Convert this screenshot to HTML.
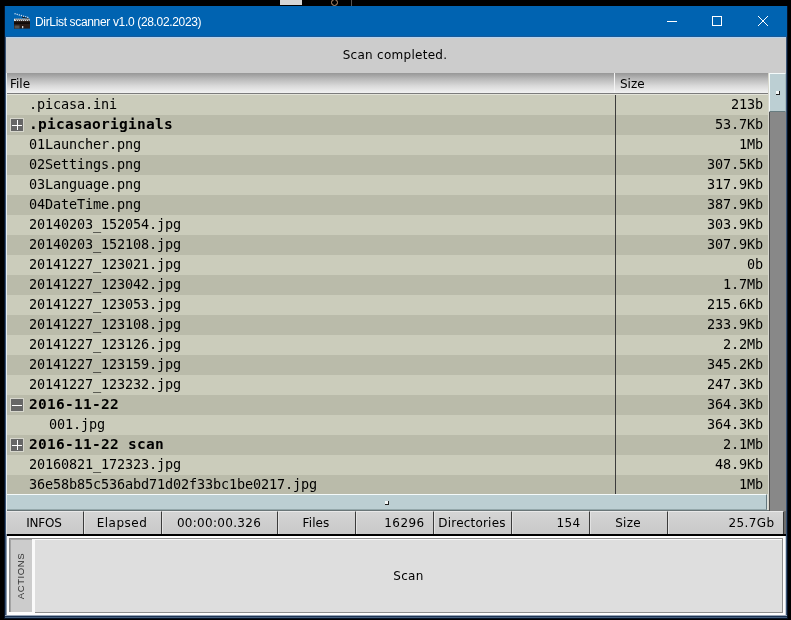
<!DOCTYPE html>
<html><head><meta charset="utf-8"><title>DirList scanner</title>
<style>
html,body{margin:0;padding:0;background:#000;}
body{width:791px;height:620px;position:relative;overflow:hidden;font-family:"DejaVu Sans","Liberation Sans",sans-serif;font-size:12px;color:#000;}
div,span,i,svg{position:absolute;box-sizing:border-box;}
span,#status{will-change:transform;}
#wout{left:4px;top:6px;width:784px;height:613px;background:#061226;}
#win{left:5px;top:6px;width:782px;height:612px;background:#3a5474;}
#b615{left:5px;top:615px;width:782px;height:1px;background:#9aa6b8;}
#b616{left:5px;top:616px;width:782px;height:1px;background:#1c3352;}
#b617{left:5px;top:617px;width:782px;height:1px;background:#46607e;}
#lwhite{left:6px;top:73px;width:1px;height:438px;background:#e8eef2;}
#title{left:5px;top:6px;width:782px;height:31px;background:#0063b1;}
#title .t{left:30px;top:9px;font:12px "Liberation Sans",sans-serif;color:#fff;letter-spacing:-0.34px;white-space:nowrap;}
#tline{left:6px;top:37px;width:780px;height:1px;background:#b4d4f2;}
#tdark{left:5px;top:36px;width:782px;height:1px;background:#1a5a98;}
#client{left:6px;top:38px;width:780px;height:577px;background:#cccccc;}
#status{left:5px;top:38px;width:780px;height:35px;text-align:center;line-height:35px;letter-spacing:0.28px;}
#hdr{left:6px;top:73px;width:762px;height:20px;background:linear-gradient(#979797 0%,#b9b9b9 30%,#dadada 65%,#f2f2f2 100%);}
#hdr span{top:4px;letter-spacing:0;}
#hdrline{left:6px;top:93px;width:762px;height:1px;background:#7c7c7c;}
#hdrline2{left:6px;top:94px;width:762px;height:1px;background:#e4e4da;}
#rows{left:6px;top:95px;width:762px;height:400px;background:#cbccbb;overflow:hidden;font-family:"DejaVu Sans Mono","Liberation Mono",monospace;font-size:13.5px;letter-spacing:-0.127px;}
.r{left:0;width:762px;height:20px;background:#cbccbb;line-height:19px;white-space:nowrap;}
.r.d{background:#babbaa;}
.r.b .n{font-weight:bold;font-size:14.5px;letter-spacing:0.27px;}
.r .n{top:0;}
.r .s{top:0;right:4.5px;text-align:right;}
.bx{left:4px;top:3px;width:14px;height:14px;background:#666;border:1px solid #d6d6cc;}
.bx:before{content:"";position:absolute;left:1px;top:6px;width:10px;height:1px;background:#fff;}
.bx.pl:after{content:"";position:absolute;left:6px;top:1px;width:1px;height:10px;background:#fff;}
#colsep{left:615px;top:95px;width:1px;height:400px;background:#3c3c3c;}
#hsep{left:614px;top:73px;width:1px;height:21px;background:#f4f4f4;}
#gap{left:768px;top:73px;width:1px;height:437px;background:#d8d8ce;}
#vtrack{left:769px;top:73px;width:17px;height:438px;background:#888;border-left:1px solid #4e4e4e;}
#vthumb{left:769px;top:73px;width:17px;height:39px;background:#bccfd3;border-left:1px solid #f4fafa;border-top:1px solid #f4fafa;border-right:1px solid #a6babd;border-bottom:1px solid #687c80;}
.grip{width:4px;height:4px;background:#f4f8f8;border-right:1px solid #222;border-bottom:1px solid #222;}
#htrack{left:6px;top:494px;width:762px;height:16px;background:#dcdfdc;}
#hthumb{left:6px;top:494px;width:761px;height:16px;background:#bccfd3;border-top:1px solid #f4fafa;border-left:1px solid #f4fafa;border-right:1px solid #64787d;border-bottom:1px solid #94a8ab;}
#hline{left:6px;top:510px;width:763px;height:1px;background:#6a7678;}
#info{left:6px;top:511px;width:780px;height:23px;background:#6e6e6e;}
.c{top:511px;height:23px;background:linear-gradient(#d5d5d5,#cecece 50%,#c9c9c9);border-right:1px solid #3a3a3a;border-left:1px solid #e2e2e2;border-top:1px solid #e9e9e9;line-height:24px;letter-spacing:0.2px;white-space:nowrap;}
.c span{top:-1px;}
.c.c span{left:-2px;right:0;text-align:center;}
.c.r span{right:8.5px;text-align:right;}
#bline{left:7px;top:534px;width:779px;height:2px;background:#000;}
#panel{left:7px;top:536px;width:778px;height:79px;background:#fdfdfd;}
#pl6{left:6px;top:534px;width:1px;height:81px;background:#8c9aac;}
#pr785{left:785px;top:536px;width:1px;height:79px;background:#c9d2dc;}
#pin{left:9px;top:538px;width:774px;height:75px;background:#8e8e8e;}
#tab{left:10px;top:539px;width:22px;height:73px;background:#cccccc;border-left:1px solid #a4a4a4;border-top:1px solid #a4a4a4;}
#tab span{left:-15.5px;top:30px;width:50px;height:12px;line-height:12px;text-align:center;font:9.5px "Liberation Sans",sans-serif;letter-spacing:0.6px;color:#333;transform:rotate(-90deg);}
#btn{left:32px;top:539px;width:750px;height:73px;background:#dedede;border-left:3px solid #fafafa;border-top:1px solid #fafafa;text-align:center;}
#btn span{left:0;right:0;top:29px;letter-spacing:0.28px;}
</style></head><body>
<div style="left:280px;top:0;width:22px;height:5px;background:#d6d6d6"></div>
<div style="left:331px;top:-1px;width:7px;height:7px;border:1px solid #c09878;border-radius:50%"></div>
<div style="left:351px;top:0;width:1px;height:6px;background:#555"></div>
<div id="wout"></div><div id="win"></div>
<div id="title">
 <svg width="18" height="18" style="left:8px;top:6px" viewBox="0 0 18 18">
  <path d="M1.5 1.6L15.5 5.6" stroke="#cfdff0" stroke-width="1.300" stroke-dasharray="1.2 1"/>
  <path d="M9 5L16.3 7" stroke="#14100e" stroke-width="1"/>
  <rect x="1" y="8.6" width="16" height="8" fill="#2a1c17"/>
  <rect x="1" y="6.7" width="15.6" height="2.2" fill="#f0f0f0"/>
  <path d="M2.5 6.7l1.3 2.2M4.5 6.7l1.3 2.2M6.5 6.7l1.3 2.2M8.500 6.7l1.3 2.2M10.5 6.7l1.3 2.2M12.5 6.7l1.3 2.2M14.5 6.7l1.3 2.2" stroke="#3a3a3a" stroke-width="0.9"/>
  <rect x="1" y="10.300" width="16" height="1.600" fill="#0e0908"/>
  <rect x="1.5" y="13.5" width="5" height="3" fill="#56524e"/>
  <rect x="9" y="14" width="1.300" height="2.200" fill="#cfcfcf"/>
 </svg>
 <span class="t">DirList scanner v1.0 (28.02.2023)</span>
 <svg width="140" height="31" style="left:642px;top:0" viewBox="0 0 140 31" fill="none" stroke="#fff" stroke-width="1">
  <path d="M20 15.5h10"/>
  <rect x="65.500" y="10.500" width="9" height="9"/>
  <path d="M111 10l10 10M121 10l-10 10"/>
 </svg>
</div>
<div id="tdark"></div><div id="tline"></div>
<div id="client"></div>
<div id="status">Scan completed.</div>
<div id="hdr"><span style="left:4px">File</span><span style="left:613.5px">Size</span></div>
<div id="hsep"></div>
<div id="hdrline"></div><div id="hdrline2"></div>
<div id="rows">
<div class="r" style="top:0px"><span class="n" style="left:23px">.picasa.ini</span><span class="s">213b</span></div>
<div class="r d b" style="top:20px"><i class="bx pl"></i><span class="n" style="left:23px">.picasaoriginals</span><span class="s">53.7Kb</span></div>
<div class="r" style="top:40px"><span class="n" style="left:23px">01Launcher.png</span><span class="s">1Mb</span></div>
<div class="r d" style="top:60px"><span class="n" style="left:23px">02Settings.png</span><span class="s">307.5Kb</span></div>
<div class="r" style="top:80px"><span class="n" style="left:23px">03Language.png</span><span class="s">317.9Kb</span></div>
<div class="r d" style="top:100px"><span class="n" style="left:23px">04DateTime.png</span><span class="s">387.9Kb</span></div>
<div class="r" style="top:120px"><span class="n" style="left:23px">20140203_152054.jpg</span><span class="s">303.9Kb</span></div>
<div class="r d" style="top:140px"><span class="n" style="left:23px">20140203_152108.jpg</span><span class="s">307.9Kb</span></div>
<div class="r" style="top:160px"><span class="n" style="left:23px">20141227_123021.jpg</span><span class="s">0b</span></div>
<div class="r d" style="top:180px"><span class="n" style="left:23px">20141227_123042.jpg</span><span class="s">1.7Mb</span></div>
<div class="r" style="top:200px"><span class="n" style="left:23px">20141227_123053.jpg</span><span class="s">215.6Kb</span></div>
<div class="r d" style="top:220px"><span class="n" style="left:23px">20141227_123108.jpg</span><span class="s">233.9Kb</span></div>
<div class="r" style="top:240px"><span class="n" style="left:23px">20141227_123126.jpg</span><span class="s">2.2Mb</span></div>
<div class="r d" style="top:260px"><span class="n" style="left:23px">20141227_123159.jpg</span><span class="s">345.2Kb</span></div>
<div class="r" style="top:280px"><span class="n" style="left:23px">20141227_123232.jpg</span><span class="s">247.3Kb</span></div>
<div class="r d b" style="top:300px"><i class="bx mi"></i><span class="n" style="left:23px">2016-11-22</span><span class="s">364.3Kb</span></div>
<div class="r" style="top:320px"><span class="n" style="left:43px">001.jpg</span><span class="s">364.3Kb</span></div>
<div class="r d b" style="top:340px"><i class="bx pl"></i><span class="n" style="left:23px">2016-11-22 scan</span><span class="s">2.1Mb</span></div>
<div class="r" style="top:360px"><span class="n" style="left:23px">20160821_172323.jpg</span><span class="s">48.9Kb</span></div>
<div class="r d" style="top:380px"><span class="n" style="left:23px">36e58b85c536abd71d02f33bc1be0217.jpg</span><span class="s">1Mb</span></div>
</div>
<div id="colsep"></div>
<div id="vtrack"></div>
<div id="gap"></div>
<div id="vthumb"></div>
<div class="grip" style="left:776px;top:91px"></div>
<div id="htrack"></div>
<div id="hthumb"></div>
<div class="grip" style="left:385px;top:501px"></div>
<div id="hline"></div>
<div id="info"></div>
<div class="c c" style="left:6px;width:78px"><span style="letter-spacing:-0.2px">INFOS</span></div>
<div class="c c" style="left:84px;width:78px"><span style="letter-spacing:0.5px">Elapsed</span></div>
<div class="c c" style="left:162px;width:116px"><span style="letter-spacing:0.3px">00:00:00.326</span></div>
<div class="c c" style="left:278px;width:78px"><span style="letter-spacing:0.1px">Files</span></div>
<div class="c r" style="left:356px;width:78px"><span style="letter-spacing:0.4px">16296</span></div>
<div class="c c" style="left:434px;width:78px"><span style="letter-spacing:0.2px">Directories</span></div>
<div class="c r" style="left:512px;width:78px"><span style="letter-spacing:0.4px">154</span></div>
<div class="c c" style="left:590px;width:78px"><span style="letter-spacing:0.2px">Size</span></div>
<div class="c r" style="left:668px;width:116px"><span style="letter-spacing:0.4px">25.7Gb</span></div>
<div id="bline"></div>
<div id="panel"></div><div id="pl6"></div><div id="pr785"></div>
<div id="pin"></div>
<div id="tab"><span>ACTIONS</span></div>
<div style="left:9px;top:612px;width:26px;height:1px;background:#fdfdfd"></div>
<div id="btn"><span>Scan</span></div>
<div id="b615"></div><div id="b616"></div><div id="b617"></div><div id="lwhite"></div>
</body></html>
